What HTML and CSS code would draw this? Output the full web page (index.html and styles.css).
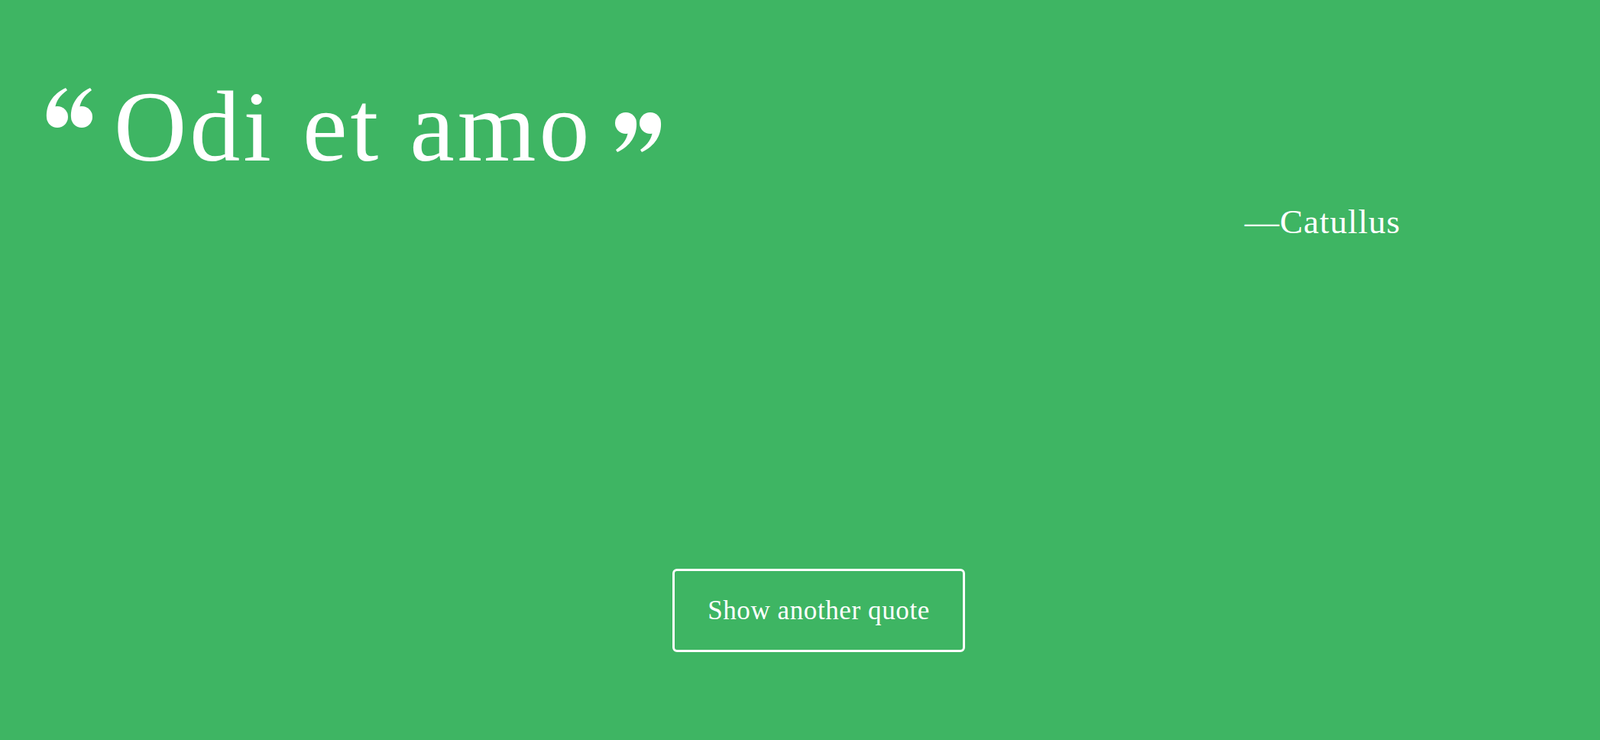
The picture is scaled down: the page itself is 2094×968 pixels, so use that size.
FILE: index.html
```html
<!DOCTYPE html>
<html lang="en">
<head>
<meta charset="utf-8">
<title>Random Quote</title>
<link rel="stylesheet" href="styles.css">
</head>
<body>
<main class="quote-box">
  <div class="quote-line">
    <svg class="mark mark-open" width="64" height="52" viewBox="0 0 64 52" aria-hidden="true">
      <g fill="#fff">
        <circle cx="15" cy="38" r="14"/>
        <path d="M1 39 C0 22 9 8 26 0 L28 3 C18 10 13 18 12 27 L8 30 Z"/>
        <circle cx="47" cy="38" r="14"/>
        <path d="M33 39 C32 22 41 8 58 0 L60 3 C50 10 45 18 44 27 L40 30 Z"/>
      </g>
    </svg>
    <h1 class="quote-text">Odi et amo</h1>
    <svg class="mark mark-close" width="64" height="52" viewBox="0 0 64 52" aria-hidden="true">
      <g fill="#fff" transform="rotate(180 32 26)">
        <circle cx="15" cy="38" r="14"/>
        <path d="M1 39 C0 22 9 8 26 0 L28 3 C18 10 13 18 12 27 L8 30 Z"/>
        <circle cx="47" cy="38" r="14"/>
        <path d="M33 39 C32 22 41 8 58 0 L60 3 C50 10 45 18 44 27 L40 30 Z"/>
      </g>
    </svg>
  </div>
  <p class="author">—Catullus</p>
  <div class="actions">
    <button class="new-quote" type="button">Show another quote</button>
  </div>
</main>
</body>
</html>
```
FILE: styles.css
```css
html, body {
  margin: 0;
  padding: 0;
}

body {
  background: #3eb563;
  color: #fff;
  font-family: "Liberation Serif", "Times New Roman", serif;
  width: 2094px;
  height: 968px;
  overflow: hidden;
}

.quote-box {
  padding: 100px 11px 0 60px;
}

.quote-line {
  display: flex;
  align-items: flex-start;
}

.mark {
  flex: none;
  display: block;
}

.mark-open {
  margin-top: 15px;
}

.mark-close {
  margin-top: 47px;
  margin-left: 26px;
}

.quote-text {
  margin: 0 0 0 25px;
  font-size: 132px;
  font-weight: normal;
  line-height: 132px;
  letter-spacing: 4px;
}

.author {
  margin: 36px 0 0;
  padding-right: 250px;
  text-align: right;
  font-size: 45px;
  line-height: 45px;
  letter-spacing: 1px;
}

.actions {
  display: flex;
  justify-content: center;
  margin-top: 431px;
}

.new-quote {
  box-sizing: border-box;
  width: 383px;
  height: 109px;
  padding: 0;
  border: 3px solid #fff;
  border-radius: 6px;
  background: transparent;
  color: #fff;
  font-family: "Liberation Serif", "Times New Roman", serif;
  font-size: 35px;
  line-height: 35px;
  letter-spacing: 0.6px;
  cursor: pointer;
}
```
